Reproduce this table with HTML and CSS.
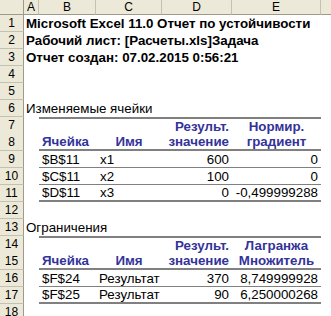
FILE: index.html
```html
<!DOCTYPE html>
<html lang="ru">
<head>
<meta charset="utf-8">
<title>Отчет по устойчивости</title>
<link rel="stylesheet" href="styles.css">
</head>
<body>
<div class="sheet">
  <div class="row head">
    <div class="ch corner"></div>
    <div class="ch">A</div>
    <div class="ch">B</div>
    <div class="ch">C</div>
    <div class="ch">D</div>
    <div class="ch">E</div>
    <div class="ch last"></div>
  </div>
  <div class="row"><div class="rh">1</div><div class="c span b">Microsoft Excel 11.0 Отчет по устойчивости</div></div>
  <div class="row"><div class="rh">2</div><div class="c span b">Рабочий лист: [Расчеты.xls]Задача</div></div>
  <div class="row"><div class="rh">3</div><div class="c span b">Отчет создан: 07.02.2015 0:56:21</div></div>
  <div class="row"><div class="rh">4</div></div>
  <div class="row"><div class="rh">5</div></div>
  <div class="row"><div class="rh">6</div><div class="c span">Изменяемые ячейки</div></div>
  <div class="row">
    <div class="rh">7</div><div class="c"></div>
    <div class="c tt"></div><div class="c tt"></div>
    <div class="c tt h r">Результ.</div><div class="c tt h m">Нормир.</div>
  </div>
  <div class="row">
    <div class="rh">8</div><div class="c"></div>
    <div class="c bt h l">Ячейка</div><div class="c bt h m">Имя</div>
    <div class="c bt h r">значение</div><div class="c bt h m">градиент</div>
  </div>
  <div class="row">
    <div class="rh">9</div><div class="c"></div>
    <div class="c bn l">$B$11</div><div class="c bn l nm">x1</div>
    <div class="c bn r">600</div><div class="c bn r">0</div>
  </div>
  <div class="row">
    <div class="rh">10</div><div class="c"></div>
    <div class="c bn l">$C$11</div><div class="c bn l nm">x2</div>
    <div class="c bn r">100</div><div class="c bn r">0</div>
  </div>
  <div class="row">
    <div class="rh">11</div><div class="c"></div>
    <div class="c bt l">$D$11</div><div class="c bt l nm">x3</div>
    <div class="c bt r">0</div><div class="c bt r">-0,499999288</div>
  </div>
  <div class="row"><div class="rh">12</div></div>
  <div class="row"><div class="rh">13</div><div class="c span">Ограничения</div></div>
  <div class="row">
    <div class="rh">14</div><div class="c"></div>
    <div class="c tt"></div><div class="c tt"></div>
    <div class="c tt h r">Результ.</div><div class="c tt h m">Лагранжа</div>
  </div>
  <div class="row">
    <div class="rh">15</div><div class="c"></div>
    <div class="c bt h l">Ячейка</div><div class="c bt h m">Имя</div>
    <div class="c bt h r">значение</div><div class="c bt h m">Множитель</div>
  </div>
  <div class="row">
    <div class="rh">16</div><div class="c"></div>
    <div class="c bn l">$F$24</div><div class="c bn l">Результат</div>
    <div class="c bn r">370</div><div class="c bn r">8,749999928</div>
  </div>
  <div class="row">
    <div class="rh">17</div><div class="c"></div>
    <div class="c bt l">$F$25</div><div class="c bt l">Результат</div>
    <div class="c bt r">90</div><div class="c bt r">6,250000268</div>
  </div>
  <div class="row"><div class="rh">18</div></div>
</div>
</body>
</html>
```
FILE: styles.css
```css
* { box-sizing: border-box; }
html, body { margin: 0; padding: 0; background: #fff; }
body {
  font-family: "Liberation Sans", Arial, sans-serif;
  font-size: 13.33px;
  color: #000;
  overflow: hidden;
}
.sheet { width: 331px; height: 316px; overflow: hidden; }
.row {
  display: grid;
  grid-template-columns: 24px 15px 57px 66px 70px 89px 1fr;
  height: 17px;
}
.row.head { height: 15px; }
.ch {
  background: #ece9d8;
  border-right: 1px solid #c4c1b0;
  border-bottom: 1px solid #9d9a8c;
  font-size: 12px;
  line-height: 14px;
  text-align: center;
}
.ch.corner { border-right: 1px solid #9d9a8c; }
.ch.last { border-right: 0; }
.rh {
  grid-column: 1;
  background: #ece9d8;
  border-right: 1px solid #9d9a8c;
  border-bottom: 1px solid #c4c1b0;
  font-size: 12px;
  line-height: 16px;
  text-align: center;
}
.c {
  display: flex;
  align-items: flex-end;
  padding: 0 3px 1px 3px;
  white-space: nowrap;
  line-height: 15px;
}
.span { grid-column: 2 / -1; padding-left: 2px; }
.b { font-weight: bold; }
.h { font-weight: bold; color: #333399; }
.l { justify-content: flex-start; }
.r { justify-content: flex-end; }
.m { justify-content: center; }
.nm { padding-left: 4px; }
.tt { border-top: 2px solid #808080; }
.bt { border-bottom: 2px solid #808080; padding-bottom: 0; }
.bn { border-bottom: 1px solid #808080; padding-bottom: 0; }
```
